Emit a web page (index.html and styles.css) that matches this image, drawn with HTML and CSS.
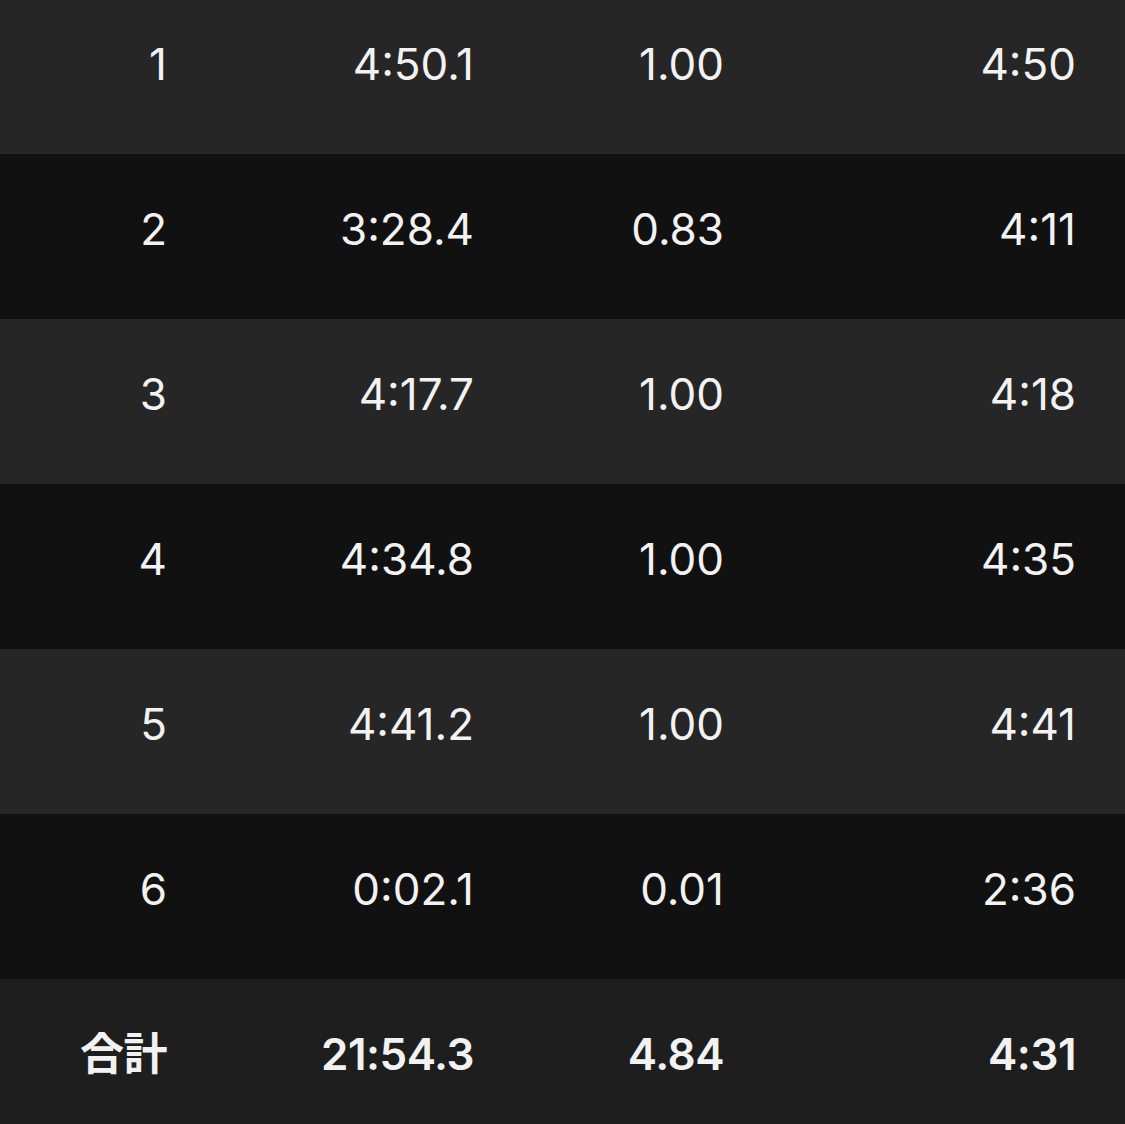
FILE: index.html
```html
<!DOCTYPE html>
<html lang="ja">
<head>
<meta charset="utf-8">
<link rel="stylesheet" href="styles.css">
</head>
<body>
<div class="table">
  <div class="row odd"><span>1</span><span>4:50.1</span><span>1.00</span><span>4:50</span></div>
  <div class="row even"><span>2</span><span>3:28.4</span><span>0.83</span><span>4:11</span></div>
  <div class="row odd"><span>3</span><span>4:17.7</span><span>1.00</span><span>4:18</span></div>
  <div class="row even"><span>4</span><span>4:34.8</span><span>1.00</span><span>4:35</span></div>
  <div class="row odd"><span>5</span><span>4:41.2</span><span>1.00</span><span>4:41</span></div>
  <div class="row even"><span>6</span><span>0:02.1</span><span>0.01</span><span>2:36</span></div>
  <div class="row total"><span>合計</span><span>21:54.3</span><span>4.84</span><span>4:31</span></div>
</div>
</body>
</html>
```

FILE: styles.css
```css
html, body {
  margin: 0;
  padding: 0;
  background: #1e1e1e;
  overflow: hidden;
}
.table {
  margin-top: -11px;
  font-family: Inter, "Noto Sans CJK JP", sans-serif;
  color: #f2f2f2;
  font-size: 44px;
}
.row {
  display: grid;
  grid-template-columns: 167px 307px 250px 352px;
  padding-right: 49px;
  height: 165px;
  box-sizing: border-box;
  padding-bottom: 15px;
  align-items: center;
}
.row span {
  text-align: right;
  line-height: 1;
}
.odd { background: #262626; }
.even { background: #111111; }
.total { background: #1e1e1e; font-weight: 600; letter-spacing: -0.5px; }
```
